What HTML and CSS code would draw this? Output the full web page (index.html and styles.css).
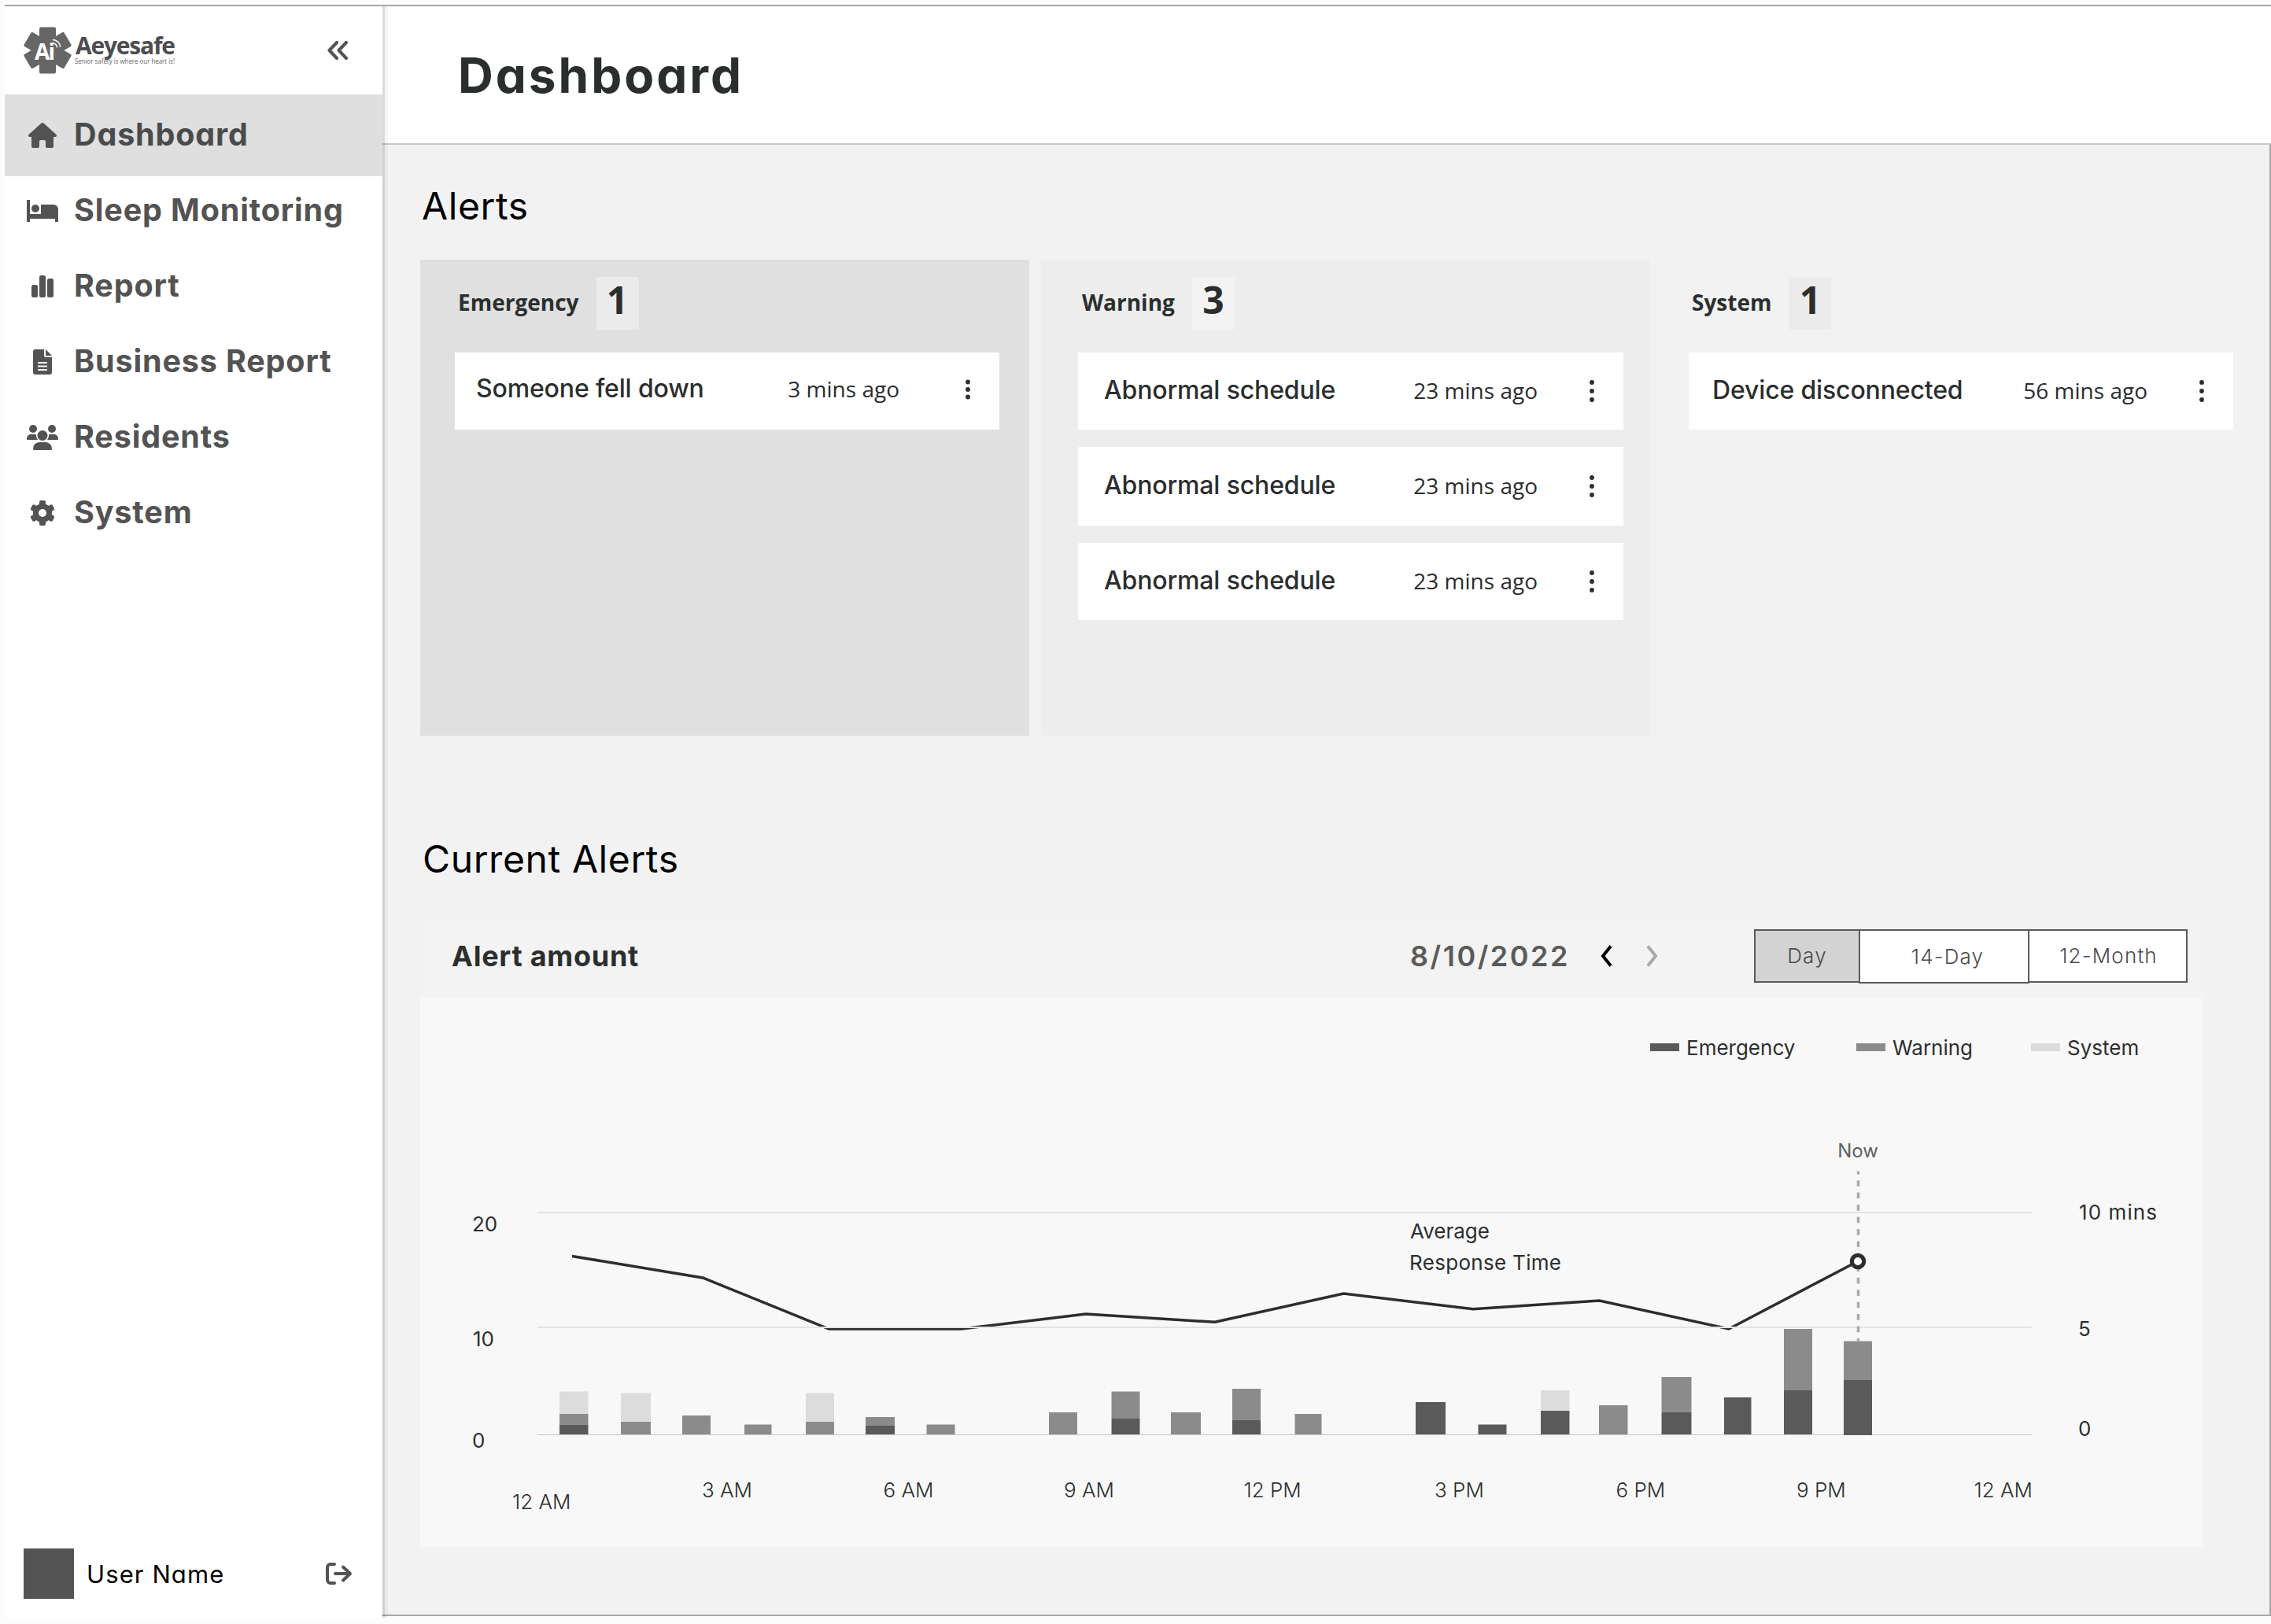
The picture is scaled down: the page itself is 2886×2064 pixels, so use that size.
FILE: index.html
```
<!DOCTYPE html>
<html lang="en">

<head>
    <meta charset="UTF-8">
    <meta name="viewport" content="width=device-width, initial-scale=1.0">
    <title>Aeyesafe - Dashboard</title>
    <link rel="stylesheet" href="styles.css">
</head>

<body>
    <div class="app">
        <aside class="sidebar">
            <div class="brand">
                <svg class="logo" width="196" height="62" viewBox="0 0 196 62">
                    <g fill="#666">
                        <rect x="20" y="1.500" width="21" height="59" rx="2" />
                        <rect x="20" y="1.500" width="21" height="59" rx="2" transform="rotate(60 30.500 31)" />
                        <rect x="20" y="1.500" width="21" height="59" rx="2" transform="rotate(120 30.500 31)" />
                    </g>
                    <text class="logo-mark" x="14" y="43" textLength="26">Ai</text>
                    <g fill="none" stroke="#fff" stroke-width="1.500">
                        <path d="M37 21.500a6 6 0 0 1 5.500 6" />
                        <path d="M37 17.500a9.500 9.500 0 0 1 9.500 9.500" />
                    </g>
                    <text class="logo-name" x="66" y="36" textLength="127">Aeyesafe</text>
                    <text class="logo-tagline" x="65" y="48" textLength="127" lengthAdjust="spacingAndGlyphs">Senior safety is where our heart is!</text>
                </svg>
                <svg class="collapse" width="26" height="24" viewBox="0 0 26 24">
                    <path d="M12 2L2.500 12L12 22M24 2L14.500 12L24 22" />
                </svg>
            </div>

            <nav class="nav">
                <a class="nav-item active">
                    <svg width="40" height="32" viewBox="0 0 40 32">
                        <path d="M18.600 .6a2 2 0 0 1 2.800 0L37.500 15c1 1 .5 3-1.200 3H34v12a2 2 0 0 1-2 2h-6a2 2 0 0 1-2-2v-6a2 2 0 0 0-2-2h-4a2 2 0 0 0-2 2v6a2 2 0 0 1-2 2H8a2 2 0 0 1-2-2V18H3.700C2 18 1.500 16 2.500 15Z" />
                    </svg>
                    <span>Dashboard</span>
                </a>
                <a class="nav-item">
                    <svg width="40" height="32" viewBox="0 0 40 32">
                        <path d="M0 2h4v18h14V8h16a6 6 0 0 1 6 6v16h-4v-4H4v4H0Z" />
                        <circle cx="11" cy="13" r="5" />
                    </svg>
                    <span>Sleep Monitoring</span>
                </a>
                <a class="nav-item">
                    <svg width="40" height="32" viewBox="0 0 40 32">
                        <rect x="6" y="14" width="8" height="16" rx="2.500" />
                        <rect x="16" y="2" width="8" height="28" rx="2.500" />
                        <rect x="26" y="6" width="8" height="24" rx="2.500" />
                    </svg>
                    <span>Report</span>
                </a>
                <a class="nav-item">
                    <svg width="40" height="32" viewBox="0 0 40 32">
                        <path d="M11 0h11v8a2 2 0 0 0 2 2h8v19a3 3 0 0 1-3 3H11a3 3 0 0 1-3-3V3a3 3 0 0 1 3-3ZM24 0l8 8h-8Z" />
                        <path class="cut" d="M14 17h12M14 21.500h12M14 26h12" />
                    </svg>
                    <span>Business Report</span>
                </a>
                <a class="nav-item">
                    <svg width="40" height="32" viewBox="0 0 40 32">
                        <circle cx="8" cy="5" r="5" />
                        <circle cx="32" cy="5" r="5" />
                        <circle cx="20" cy="13.500" r="6.500" />
                        <path d="M6 12h4.500l1.500 .5a9 9 0 0 0 2 6.500H1.500A1.300 1.300 0 0 1 0 17.500C.2 14 2.500 12 6 12ZM34 12h-4.500l-1.500 .5a9 9 0 0 1-2 6.500h12.500a1.300 1.300 0 0 0 1.500-1.500C39.800 14 37.500 12 34 12Z" />
                        <path d="M16 22h8a8 8 0 0 1 8 8.500a1.500 1.500 0 0 1-1.500 1.500h-21A1.500 1.500 0 0 1 8 30.500A8 8 0 0 1 16 22Z" />
                    </svg>
                    <span>Residents</span>
                </a>
                <a class="nav-item">
                    <svg width="40" height="32" viewBox="0 0 40 32">
                        <circle cx="20" cy="16" r="12" />
                        <rect x="16" y="0" width="8" height="32" rx="2" />
                        <rect x="16" y="0" width="8" height="32" rx="2" transform="rotate(60 20 16)" />
                        <rect x="16" y="0" width="8" height="32" rx="2" transform="rotate(120 20 16)" />
                        <circle class="hole" cx="20" cy="16" r="5" />
                    </svg>
                    <span>System</span>
                </a>
            </nav>

            <div class="user">
                <div class="avatar"></div>
                <span class="user-name">User Name</span>
                <svg class="logout" width="34" height="28" viewBox="0 0 34 28">
                    <path d="M11 2H6a4 4 0 0 0-4 4v16a4 4 0 0 0 4 4h5M12 14h19M22 5.500L31 14L22 22.500" />
                </svg>
            </div>
        </aside>

        <main class="main">
            <header class="header">
                <h1>Dashboard</h1>
            </header>

            <div class="content">
                <h2>Alerts</h2>
                <div class="alerts">
                    <section class="panel emergency">
                        <div class="panel-head">
                            <h3>Emergency</h3>
                            <span class="count">1</span>
                        </div>
                        <div class="alert">
                            <span class="alert-title">Someone fell down</span>
                            <span class="alert-time">3 mins ago</span>
                            <svg class="dots" width="12" height="28" viewBox="0 0 12 28"><circle cx="6" cy="4.500" r="2.900" /><circle cx="6" cy="14" r="2.900" /><circle cx="6" cy="23.500" r="2.900" /></svg>
                        </div>
                    </section>

                    <section class="panel warning">
                        <div class="panel-head">
                            <h3>Warning</h3>
                            <span class="count">3</span>
                        </div>
                        <div class="alert">
                            <span class="alert-title">Abnormal schedule</span>
                            <span class="alert-time">23 mins ago</span>
                            <svg class="dots" width="12" height="28" viewBox="0 0 12 28"><circle cx="6" cy="3" r="2.900" /><circle cx="6" cy="14" r="2.900" /><circle cx="6" cy="25" r="2.900" /></svg>
                        </div>
                        <div class="alert tall">
                            <span class="alert-title">Abnormal schedule</span>
                            <span class="alert-time">23 mins ago</span>
                            <svg class="dots" width="12" height="28" viewBox="0 0 12 28"><circle cx="6" cy="3" r="2.900" /><circle cx="6" cy="14" r="2.900" /><circle cx="6" cy="25" r="2.900" /></svg>
                        </div>
                        <div class="alert">
                            <span class="alert-title">Abnormal schedule</span>
                            <span class="alert-time">23 mins ago</span>
                            <svg class="dots" width="12" height="28" viewBox="0 0 12 28"><circle cx="6" cy="3" r="2.900" /><circle cx="6" cy="14" r="2.900" /><circle cx="6" cy="25" r="2.900" /></svg>
                        </div>
                    </section>

                    <section class="panel system">
                        <div class="panel-head">
                            <h3>System</h3>
                            <span class="count">1</span>
                        </div>
                        <div class="alert">
                            <span class="alert-title">Device disconnected</span>
                            <span class="alert-time">56 mins ago</span>
                            <svg class="dots" width="12" height="28" viewBox="0 0 12 28"><circle cx="6" cy="3" r="2.900" /><circle cx="6" cy="14" r="2.900" /><circle cx="6" cy="25" r="2.900" /></svg>
                        </div>
                    </section>
                </div>

                <h2 class="current-title">Current Alerts</h2>
                <section class="chart-card">
                    <div class="chart-head">
                        <h3>Alert amount</h3>
                        <span class="date">8/10/2022</span>
                        <svg class="arrow" width="15" height="28" viewBox="0 0 15 28"><path d="M13 1.500L3 14L13 26.500" /></svg>
                        <svg class="arrow next" width="15" height="28" viewBox="0 0 15 28"><path d="M2 1.500L12 14L2 26.500" /></svg>
                        <div class="range">
                            <button class="range-day selected">Day</button>
                            <button class="range-14">14-Day</button>
                            <button class="range-12">12-Month</button>
                        </div>
                    </div>

                    <div class="legend">
                        <span class="legend-item key-emergency">Emergency</span>
                        <span class="legend-item key-warning">Warning</span>
                        <span class="legend-item key-system">System</span>
                    </div>

                    <svg class="chart" width="2265" height="618" viewBox="534 1348 2265 618">
                        <!-- response time -->
                        <polyline class="response" points="727,1596.500 893,1624 1053.500,1689 1221,1689 1380,1670 1544,1680.300 1707.500,1644 1872,1663.700 2032.500,1653 2197,1689 2361,1603" />

                        <!-- grid -->
                        <path class="grid" d="M683 1541H2581.500M683 1687H2581.500" />
                        <path class="axis" d="M683 1823.500H2581.500" />

                        <!-- bars -->
                        <g class="bar-system">
                            <rect x="711" y="1768.500" width="36.500" height="28.500" />
                            <rect x="789" y="1770.500" width="38" height="36.500" />
                            <rect x="1024" y="1770.500" width="36" height="36.500" />
                            <rect x="1958" y="1767" width="36.500" height="26" />
                        </g>
                        <g class="bar-warning">
                            <rect x="711" y="1797" width="36.500" height="13.500" />
                            <rect x="789" y="1807" width="38" height="16" />
                            <rect x="867" y="1799" width="36" height="24" />
                            <rect x="946" y="1810.500" width="34.500" height="12.500" />
                            <rect x="1024" y="1807" width="36" height="16" />
                            <rect x="1100" y="1801" width="37" height="11" />
                            <rect x="1177.500" y="1810.500" width="36" height="12.500" />
                            <rect x="1333" y="1795" width="36" height="28" />
                            <rect x="1412.500" y="1768.500" width="36" height="34.500" />
                            <rect x="1488" y="1795" width="38" height="28" />
                            <rect x="1566" y="1765" width="36" height="40" />
                            <rect x="1645.500" y="1797" width="34" height="26" />
                            <rect x="2032" y="1786" width="36.500" height="37" />
                            <rect x="2111.500" y="1750" width="38" height="45" />
                            <rect x="2267" y="1689" width="36" height="78" />
                            <rect x="2343" y="1704.500" width="36" height="49.500" />
                        </g>
                        <g class="bar-emergency">
                            <rect x="711" y="1810.500" width="36.500" height="12.500" />
                            <rect x="1100" y="1812" width="37" height="11" />
                            <rect x="1412.500" y="1803" width="36" height="20" />
                            <rect x="1566" y="1805" width="36" height="18" />
                            <rect x="1799" y="1782" width="38" height="41" />
                            <rect x="1878.500" y="1810.500" width="36" height="12.500" />
                            <rect x="1958" y="1793" width="36.500" height="30" />
                            <rect x="2111.500" y="1795" width="38" height="28" />
                            <rect x="2191" y="1776" width="34.500" height="47" />
                            <rect x="2267" y="1767" width="36" height="56" />
                            <rect x="2343" y="1754" width="36" height="70" />
                        </g>

                        <!-- current time marker -->
                        <path class="now-line" d="M2361.500 1488.500V1704.500" />
                        <circle class="now-dot" cx="2361" cy="1603" r="7.700" />
                        <text class="now" x="2361" y="1470.500" text-anchor="middle">Now</text>

                        <text x="1792" y="1573.500">Average</text>
                        <text x="1791" y="1613.500" textLength="193">Response Time</text>

                        <text x="600" y="1564.500">20</text>
                        <text x="601" y="1711">10</text>
                        <text x="600" y="1840">0</text>

                        <text x="2642" y="1550" textLength="99">10 mins</text>
                        <text x="2641" y="1698">5</text>
                        <text x="2641" y="1825">0</text>

                        <g class="hours">
                            <text x="651" y="1917.500">12 AM</text>
                            <text x="892" y="1902.500">3 AM</text>
                            <text x="1122.500" y="1902.500">6 AM</text>
                            <text x="1352" y="1902.500">9 AM</text>
                            <text x="1580.500" y="1902.500">12 PM</text>
                            <text x="1823" y="1902.500">3 PM</text>
                            <text x="2053.500" y="1902.500">6 PM</text>
                            <text x="2283" y="1902.500">9 PM</text>
                            <text x="2508.500" y="1902.500">12 AM</text>
                        </g>
                    </svg>
                </section>
            </div>
        </main>
    </div>
</body>

</html>
```

FILE: styles.css
```
* {
    box-sizing: border-box;
}

body {
    margin: 0;
    background: #fcfcfc;
    font-family: Inter, sans-serif;
    color: #2b2e2e;
}

h1, h2, h3 {
    margin: 0;
}

.app {
    display: flex;
    align-items: flex-start;
    width: 2880px;
    margin: 6px 0 0 6px;
    border-top: 2px solid #a8a8a8;
}

/* sidebar */
.sidebar {
    position: relative;
    display: flex;
    flex-direction: column;
    width: 480px;
    height: 2048px;
    background: #fff;
    box-shadow: 3px 0 0 rgba(0, 0, 0, 0.1), 7px 0 0 rgba(0, 0, 0, 0.04);
}

.brand {
    display: flex;
    align-items: center;
    justify-content: space-between;
    height: 112px;
    padding: 0 44px 0 24px;
}

.logo-mark {
    font: bold 28px "Open Sans", sans-serif;
    fill: #fff;
}

.logo-name {
    font: bold 30px "Open Sans", sans-serif;
    fill: #4d4d4f;
}

.logo-tagline {
    font: 8.5px "Open Sans", sans-serif;
    fill: #666;
}

.collapse,
.logout {
    fill: none;
    stroke: #535353;
    stroke-width: 4;
    stroke-linecap: round;
    stroke-linejoin: round;
}

.nav {
    flex: 1;
    padding-top: 4px;
}

.nav-item {
    display: flex;
    align-items: center;
    gap: 20px;
    height: 96px;
    padding-left: 28px;
    font-size: 39.5px;
    font-weight: 700;
    font-feature-settings: "cv11";
    letter-spacing: 0.85px;
    color: #535353;
}

.nav-item span {
    padding-bottom: 2px;
}

.nav-item svg {
    fill: #535353;
}

.nav-item .cut {
    stroke: #fff;
    stroke-width: 2;
}

.nav-item .hole {
    fill: #fff;
}

.nav-item.active {
    height: 104px;
    margin: -4px 0;
    background: #dfdfdf;
    color: #4a4b4c;
}

.user {
    display: flex;
    align-items: center;
    padding: 0 38px 24px 24px;
}

.avatar {
    width: 64px;
    height: 64px;
    margin-right: 16px;
    background: #545454;
}

.user-name {
    flex: 1;
    font-size: 31px;
    font-feature-settings: "cv11";
    letter-spacing: 1.1px;
    color: #000;
}

/* main */
.main {
    width: 2400px;
    height: 2046px;
    background: #f2f2f2;
    border-bottom: 2px solid #a8a8a8;
}

.header {
    display: flex;
    align-items: center;
    height: 176px;
    padding-left: 96px;
    background: #fff;
    border-bottom: 2px solid #c8c8c8;
}

.header h1 {
    font-size: 62px;
    font-weight: 700;
    font-feature-settings: "cv11";
    letter-spacing: 3px;
}

.content {
    height: 1868px;
    padding: 48px 0 0 48px;
    border-right: 2px solid #a8a8a8;
}

.content h2 {
    margin-left: 2px;
    font-size: 48px;
    font-weight: 400;
    line-height: 60px;
    letter-spacing: 0.6px;
    color: #000;
}

.alerts {
    display: flex;
    gap: 15px;
    margin-top: 38px;
}

.panel {
    flex: none;
    width: 774px;
    height: 605px;
    padding-top: 22px;
}

.panel.emergency {
    padding-left: 44px;
    padding-right: 38px;
    background: #e0e0e0;
}

.panel.warning {
    padding-left: 47px;
    padding-right: 34px;
    background: #ededed;
}

.panel.system {
    width: 772px;
    padding-left: 34px;
    padding-right: 46px;
}

.panel-head {
    display: flex;
    align-items: center;
    gap: 22px;
    margin-bottom: 29px;
    padding-left: 4px;
}

.warning .panel-head {
    padding-left: 5px;
}

.panel-head h3 {
    padding-bottom: 4px;
    font-family: "Open Sans", sans-serif;
    font-size: 28px;
}

.count {
    width: 54px;
    height: 67px;
    background: #ebebeb;
    font: bold 48px/58px "Open Sans", sans-serif;
    text-align: center;
}

.warning .count {
    background: #f3f3f3;
}

.alert {
    display: flex;
    align-items: center;
    height: 98px;
    margin-bottom: 22px;
    padding: 0 34px 3px 33px;
    background: #fff;
}

.alert.tall {
    height: 100px;
}

.emergency .alert {
    padding: 0 34px 7px 27px;
}

.system .alert {
    padding-left: 30px;
    padding-right: 34px;
}

.alert-title {
    flex: 1;
    font-size: 32px;
    font-weight: 500;
    letter-spacing: -0.15px;
}

.alert-time {
    margin-right: 63px;
    font-family: "Open Sans", sans-serif;
    font-size: 28px;
}

.emergency .alert-time {
    margin-right: 81px;
}

.dots {
    margin-top: 3px;
    fill: #2b2e2e;
}

/* chart */
.content .current-title {
    margin: 127px 0 45px 3px;
}

.chart-card {
    width: 2265px;
    background: #f8f8f8;
}

.chart-head {
    display: flex;
    align-items: center;
    height: 101px;
    padding: 0 19px 5px 40px;
    background: #f3f3f3;
}

.chart-head h3 {
    flex: 1;
    font-size: 36px;
    font-weight: 700;
    letter-spacing: 0.75px;
}

.date {
    width: 242px;
    font-size: 36px;
    font-weight: 600;
    letter-spacing: 2.5px;
    color: #5a5a5a;
}

.arrow {
    margin-right: 43px;
    fill: none;
    stroke: #000;
    stroke-width: 4;
}

.arrow.next {
    margin-right: 122px;
    stroke: #a9a9a9;
}

.range {
    display: flex;
    align-items: flex-start;
}

.range button {
    height: 68px;
    padding: 0;
    border: 2px solid #5a5a5a;
    background: #fff;
    font: 300 26px Inter, sans-serif;
    letter-spacing: 1.2px;
    color: #4a4a4a;
}

.range .range-day {
    width: 135px;
}

.range .range-14 {
    width: 217px;
    height: 69px;
    margin: 0 -2px;
    padding-left: 9px;
}

.range .range-12 {
    width: 203px;
    padding-left: 2px;
}

.range .selected {
    background: #d3d3d3;
}

.legend {
    display: flex;
    justify-content: flex-end;
    padding-top: 48px;
}

.legend-item {
    display: flex;
    align-items: center;
    width: 218px;
    font-size: 26px;
    line-height: 32px;
}

.legend-item::before {
    content: "";
    width: 37px;
    height: 10px;
    margin: 0 9px 2px 0;
    background: #dcdcdc;
}

.key-emergency {
    width: 262px;
}

.key-emergency::before {
    background: #5a5a5a;
}

.key-warning {
    width: 222px;
}

.key-warning::before {
    background: #8b8b8b;
}

.chart {
    display: block;
}

.chart text {
    font-size: 26px;
    fill: #2b2e2e;
}

.chart .now {
    font-size: 24px;
    fill: #5f5f5f;
}

.chart .hours text {
    font-weight: 300;
}

.response {
    fill: none;
    stroke: #2b2e2e;
    stroke-width: 3.5;
}

.grid {
    stroke: #e2e2e2;
    stroke-width: 2;
}

.axis {
    stroke: #c8c8c8;
    stroke-width: 1;
}

.bar-system {
    fill: #dcdcdc;
}

.bar-warning {
    fill: #8b8b8b;
}

.bar-emergency {
    fill: #5a5a5a;
}

.now-line {
    stroke: #aaa;
    stroke-width: 3.5;
    stroke-dasharray: 7.7 7.75;
    stroke-dashoffset: 3.8;
}

.now-dot {
    fill: #fff;
    stroke: #2b2e2e;
    stroke-width: 5.2;
}
```
